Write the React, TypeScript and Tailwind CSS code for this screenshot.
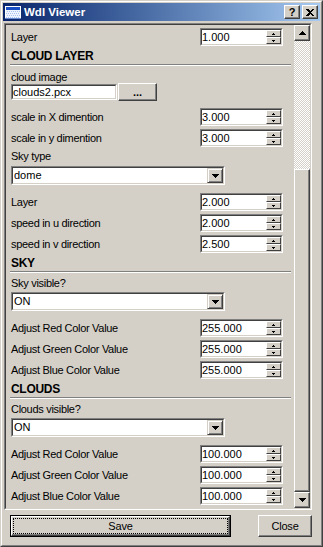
import React from "react";

const FONT = "font-['Liberation_Sans',Arial,sans-serif]";

function Raised({ className = "", children }: { className?: string; children?: React.ReactNode }) {
  return (
    <div
      className={`flex items-center justify-center border border-t-white border-l-white border-b-[#404040] border-r-[#404040] bg-[#d4d0c8] shadow-[inset_-1px_-1px_0_#808080] ${className}`}
    >
      {children}
    </div>
  );
}

function Sunken({
  className = "",
  innerClassName = "",
  children,
}: {
  className?: string;
  innerClassName?: string;
  children?: React.ReactNode;
}) {
  return (
    <div className={`border border-t-[#808080] border-l-[#808080] border-b-white border-r-white ${className}`}>
      <div
        className={`h-full w-full border border-t-[#404040] border-l-[#404040] border-b-[#d4d0c8] border-r-[#d4d0c8] ${innerClassName}`}
      >
        {children}
      </div>
    </div>
  );
}

function Tri({ up = false, w = 7, h = 4 }: { up?: boolean; w?: number; h?: number }) {
  const pts = up ? `0,${h} ${w},${h} ${w / 2},0` : `0,0 ${w},0 ${w / 2},${h}`;
  return (
    <svg width={w} height={h} viewBox={`0 0 ${w} ${h}`} className="block" shapeRendering="crispEdges">
      <polygon points={pts} fill="#000" />
    </svg>
  );
}

function SpinBtn({ up = false }: { up?: boolean }) {
  return (
    <div className="flex h-[7px] items-center justify-center border border-t-white border-l-white border-b-[#404040] border-r-[#404040] bg-[#d4d0c8]">
      <svg width="3" height="2" viewBox="0 0 3 2" className="block" shapeRendering="crispEdges">
        {up ? (
          <>
            <rect x="1" y="0" width="1" height="1" fill="#000" />
            <rect x="0" y="1" width="3" height="1" fill="#000" />
          </>
        ) : (
          <>
            <rect x="0" y="0" width="3" height="1" fill="#000" />
            <rect x="1" y="1" width="1" height="1" fill="#000" />
          </>
        )}
      </svg>
    </div>
  );
}

function Spin({ value }: { value: string }) {
  return (
    <Sunken className="h-[18px] w-[83px] shrink-0" innerClassName="flex bg-white">
      <div className="flex-1 text-[11px] leading-[14px] text-black">{value}</div>
      <div className="flex w-[15px] flex-col">
        <SpinBtn up />
        <SpinBtn />
      </div>
    </Sunken>
  );
}

function SpinRow({ label, value, className = "" }: { label: string; value: string; className?: string }) {
  return (
    <div className={`flex h-[18px] items-center justify-between pr-[11px] ${className}`}>
      <span className="text-[11px] leading-[13px] tracking-[-0.3px] text-black">{label}</span>
      <Spin value={value} />
    </div>
  );
}

function Combo({ value, className = "" }: { value: string; className?: string }) {
  return (
    <Sunken className={`h-[19px] w-[214px] ${className}`} innerClassName="flex bg-white">
      <div className="flex-1 pl-px text-[11px] leading-[15px] text-black">{value}</div>
      <div className="flex w-[16px] items-center justify-center border border-t-[#d4d0c8] border-l-[#d4d0c8] border-b-[#404040] border-r-[#404040] bg-[#d4d0c8] shadow-[inset_1px_1px_0_#ffffff,inset_-1px_-1px_0_#808080]">
        <Tri />
      </div>
    </Sunken>
  );
}

function Heading({ text, className = "" }: { text: string; className?: string }) {
  return (
    <div className={`h-[13px] text-[12px] font-bold leading-[13px] tracking-[-0.3px] text-black ${className}`}>
      {text}
    </div>
  );
}

function Sep() {
  return <div className="mt-px -ml-px mr-[3px] h-[2px] border-t border-t-[#808080] border-b border-b-white" />;
}

function Label({ text, className = "" }: { text: string; className?: string }) {
  return (
    <div className={`h-[13px] text-[11px] leading-[13px] tracking-[-0.3px] text-black ${className}`}>{text}</div>
  );
}

function TitleIcon() {
  return (
    <svg width="16" height="13" viewBox="0 0 16 13" className="block" shapeRendering="crispEdges">
      <rect x="0" y="0" width="16" height="13" fill="#ffffff" />
      <rect x="1" y="1" width="14" height="3" fill="#1a4ec4" />
      <rect x="1" y="4" width="14" height="8" fill="#eef3ff" />
      {[5, 7, 9, 11].map((y) =>
        [2, 4, 6, 8, 10, 12, 14].map((x) => (
          <rect key={`${x}-${y}`} x={x - ((y / 2) % 2)} y={y} width="1" height="1" fill="#a9c0f0" />
        ))
      )}
      <rect x="0" y="12" width="16" height="1" fill="#6a88d0" />
    </svg>
  );
}

export default function App() {
  return (
    <div className={`h-[547px] w-[323px] ${FONT}`}>
      <div className="h-full w-full border border-t-[#d4d0c8] border-l-[#d4d0c8] border-b-[#404040] border-r-[#404040]">
        <div className="h-full w-full border border-t-white border-l-white border-b-[#808080] border-r-[#808080]">
          <div className="flex h-full w-full flex-col bg-[#d4d0c8] p-px">
            {/* Title bar */}
            <div className="flex h-[18px] items-center bg-linear-to-r from-[#0a246a] to-[#a6caf0]">
              <div className="ml-[2px]">
                <TitleIcon />
              </div>
              <span className="ml-[3px] text-[11.5px] font-bold leading-[18px] text-white">Wdl Viewer</span>
              <div className="ml-auto mr-[2px] flex gap-[2px]">
                <Raised className="h-[14px] w-[16px]">
                  <span className="text-[11px] font-bold leading-[11px] text-black">?</span>
                </Raised>
                <Raised className="h-[14px] w-[16px]">
                  <svg width="8" height="7" viewBox="0 0 8 7" className="block" shapeRendering="crispEdges">
                    <path d="M0 0h2l2 2 2-2h2L5 3.5 8 7H6L4 5 2 7H0l3-3.5z" fill="#000" />
                  </svg>
                </Raised>
              </div>
            </div>

            {/* Main panel */}
            <div className="mt-[2px] ml-px">
              <Sunken className="h-[487px] w-[308px] bg-[#d4d0c8]" innerClassName="flex">
                <div className="flex flex-1 flex-col overflow-hidden pl-[5px]">
                  <SpinRow className="mt-[3px]" label="Layer" value="1.000" />
                  <Heading className="mt-[4px]" text="CLOUD LAYER" />
                  <Sep />
                  <div className="mt-[5px] h-[12px] text-[11px] leading-[12px] tracking-[-0.3px] text-black">
                    cloud image
                  </div>
                  <div className="flex h-[18px] items-center">
                    <Sunken className="h-[16px] w-[106px]" innerClassName="bg-white">
                      <div className="text-[11px] leading-[12px] text-black">clouds2.pcx</div>
                    </Sunken>
                    <Raised className="ml-px h-[18px] w-[39px]">
                      <span className="text-[11px] font-bold leading-[11px] text-black">...</span>
                    </Raised>
                  </div>
                  <SpinRow className="mt-[7px]" label="scale in X dimention" value="3.000" />
                  <SpinRow className="mt-[3px]" label="scale in y dimention" value="3.000" />
                  <Label className="mt-[3px]" text="Sky type" />
                  <Combo className="mt-[3px]" value="dome" />
                  <SpinRow className="mt-[8px]" label="Layer" value="2.000" />
                  <SpinRow className="mt-[3px]" label="speed in u direction" value="2.000" />
                  <SpinRow className="mt-[3px]" label="speed in v direction" value="2.500" />
                  <Heading className="mt-[4px]" text="SKY" />
                  <Sep />
                  <Label className="mt-[4px]" text="Sky visible?" />
                  <Combo className="mt-[2px]" value="ON" />
                  <SpinRow className="mt-[8px]" label="Adjust Red Color Value" value="255.000" />
                  <SpinRow className="mt-[3px]" label="Adjust Green Color Value" value="255.000" />
                  <SpinRow className="mt-[3px]" label="Adjust Blue Color Value" value="255.000" />
                  <Heading className="mt-[4px]" text="CLOUDS" />
                  <Sep />
                  <Label className="mt-[4px]" text="Clouds visible?" />
                  <Combo className="mt-[2px]" value="ON" />
                  <SpinRow className="mt-[8px]" label="Adjust Red Color Value" value="100.000" />
                  <SpinRow className="mt-[3px]" label="Adjust Green Color Value" value="100.000" />
                  <SpinRow className="mt-[3px]" label="Adjust Blue Color Value" value="100.000" />
                </div>

                {/* Scrollbar */}
                <div className="flex w-[16px] flex-col">
                  <Raised className="h-[16px] w-[16px] shrink-0">
                    <Tri up />
                  </Raised>
                  <div className="h-[128px] shrink-0 [background-image:repeating-conic-gradient(#ffffff_0%_25%,#d4d0c8_0%_50%)] [background-size:2px_2px]" />
                  <Raised className="w-[16px] flex-1" />
                  <Raised className="h-[16px] w-[16px] shrink-0">
                    <Tri />
                  </Raised>
                </div>
              </Sunken>
            </div>

            {/* Buttons */}
            <div className="mt-[5px] flex h-[22px] justify-between pl-[7px] pr-[8px]">
              <div className="h-[22px] w-[221px] border border-black">
                <div className="h-full w-full border border-t-white border-l-white border-b-[#404040] border-r-[#404040] bg-[#d4d0c8] p-px shadow-[inset_-1px_-1px_0_#808080]">
                  <div className="flex h-full w-full items-center justify-center border border-dotted border-black">
                    <span className="text-[11px] leading-[13px] tracking-[-0.2px] text-black">Save</span>
                  </div>
                </div>
              </div>
              <Raised className="h-[22px] w-[54px]">
                <span className="text-[11px] leading-[13px] tracking-[-0.2px] text-black">Close</span>
              </Raised>
            </div>
          </div>
        </div>
      </div>
    </div>
  );
}
